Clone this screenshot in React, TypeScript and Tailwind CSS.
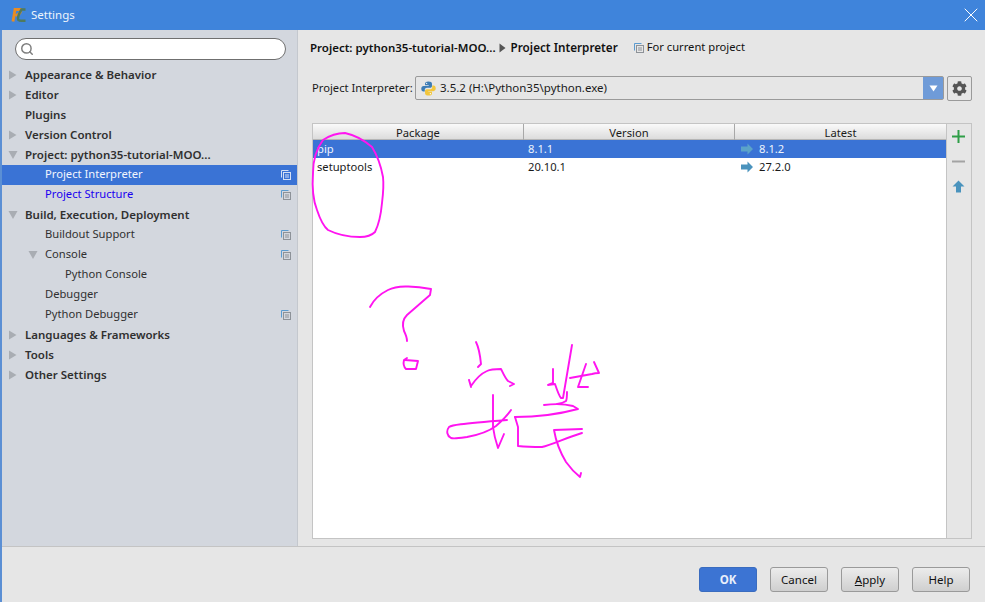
import { Search, X } from 'lucide-react';
import { FaCog } from 'react-icons/fa';

type TreeRow = {
  label: string;
  bold?: boolean;
  arrow?: 'right' | 'down';
  level?: 0 | 1 | 2;
  copy?: boolean;
  selected?: boolean;
  link?: boolean;
};

const TREE: TreeRow[] = [
  { label: 'Appearance & Behavior', bold: true, arrow: 'right' },
  { label: 'Editor', bold: true, arrow: 'right' },
  { label: 'Plugins', bold: true },
  { label: 'Version Control', bold: true, arrow: 'right' },
  { label: 'Project: python35-tutorial-MOO...', bold: true, arrow: 'down' },
  { label: 'Project Interpreter', level: 1, copy: true, selected: true },
  { label: 'Project Structure', level: 1, copy: true, link: true },
  { label: 'Build, Execution, Deployment', bold: true, arrow: 'down' },
  { label: 'Buildout Support', level: 1, copy: true },
  { label: 'Console', level: 1, arrow: 'down', copy: true },
  { label: 'Python Console', level: 2 },
  { label: 'Debugger', level: 1 },
  { label: 'Python Debugger', level: 1, copy: true },
  { label: 'Languages & Frameworks', bold: true, arrow: 'right' },
  { label: 'Tools', bold: true, arrow: 'right' },
  { label: 'Other Settings', bold: true, arrow: 'right' },
];

function Arrow({ dir }: { dir: 'right' | 'down' }) {
  return (
    <svg width="10" height="10" viewBox="0 0 10 10" className="shrink-0">
      {dir === 'right' ? (
        <polygon points="1,0.500 8.500,5 1,9.500" fill="#a9adb3" />
      ) : (
        <polygon points="0.500,1 9.500,1 5,9" fill="#a9adb3" />
      )}
    </svg>
  );
}

function CopyIcon({ light }: { light?: boolean }) {
  const front = light ? '#d5e0f5' : '#8d9298';
  const back = light ? '#d5e0f5' : '#5b9bd0';
  return (
    <svg width="10" height="10" viewBox="0 0 10 10" fill="none">
      <path d="M0.500 7.500V0.500H7.500" stroke={back} />
      <rect x="2.500" y="2.500" width="7" height="7" stroke={front} />
      <path d="M4 5H8M4 7H8" stroke={front} />
    </svg>
  );
}

function PythonIcon() {
  return (
    <svg width="15" height="15" viewBox="0 0 16 16">
      <path d="M8 0.500C5 0.500 4.300 1.500 4.300 3V4.500H8.200V5.200H2.800C1.200 5.200 0.300 6.400 0.300 8.200C0.300 10 1.200 11.200 2.600 11.200H4V9.400C4 8 5.200 7.200 6.400 7.200H9.800C10.900 7.200 11.700 6.400 11.700 5.300V3C11.700 1.400 10.300 0.500 8 0.500Z" fill="#3d7cb5" />
      <path d="M8 15.500C11 15.500 11.700 14.500 11.700 13V11.500H7.800V10.800H13.200C14.800 10.800 15.700 9.600 15.700 7.800C15.700 6 14.800 4.800 13.400 4.800H12V6.600C12 8 10.800 8.800 9.600 8.800H6.200C5.100 8.800 4.300 9.600 4.300 10.700V13C4.300 14.600 5.700 15.500 8 15.500Z" fill="#f2c63c" />
      <circle cx="6" cy="2.500" r="0.700" fill="#ffffff" />
      <circle cx="10" cy="13.500" r="0.700" fill="#ffffff" />
    </svg>
  );
}

function AppLogo() {
  return (
    <svg width="15" height="16" viewBox="0 0 15 16" fill="none" className="shrink-0">
      {/* orange P with the green C wrapped round it */}
      <path d="M2 14.500L4 2.500H9.500C10 5.500 8.500 7.500 4.500 8.500" stroke="#e98c22" strokeWidth="2.800" />
      <path d="M14.500 2.500H10.500C8.500 5.500 7 9 7 12C7 13.500 8.500 13.800 14.500 13.800" stroke="#4f7a5c" strokeWidth="2.400" />
    </svg>
  );
}

function UpdateArrow({ faded }: { faded?: boolean }) {
  return (
    <svg width="12" height="12" viewBox="0 0 12 12" className="shrink-0">
      <path d="M0 3.500H6.500V0.500L12 6L6.500 11.500V8.500H0Z" fill={faded ? '#5ba3c9' : '#4a93bd'} />
    </svg>
  );
}

function Scribbles() {
  return (
    <svg
      width="985"
      height="602"
      viewBox="0 0 985 602"
      fill="none"
      stroke="#ff14f0"
      strokeWidth="1.900"
      strokeLinecap="round"
      strokeLinejoin="round"
      className="absolute left-0 top-0 pointer-events-none"
    >
      {/* circle round the package names */}
      <path d="M345 133C336 133 329 136 323 140C317 148 313 160 313 173C312 187 313 200 317 210C320 219 323 226 328 230C338 235 350 237 360 237C367 237 372 235 375 232C379 224 381 214 382 203C383 195 384 186 383 177C381 166 377 155 372 147C364 140 354 135 345 133Z" />
      {/* question mark */}
      <path d="M370 307C374 299 380 294 388 290C396 286 412 285 431 289L430 295L407 315C403 319 402 325 404 331C406 335 407 338 407 341" />
      <path d="M407 358L404 360C403 364 404 367 406 369L416 369L418 361L405 360" />
      {/* handwriting */}
      <path d="M476 342C479 348 480 354 481 364L478 367" />
      <path d="M471 387L469 380L471 386C475 380 480 374 487 371C491 369 497 369 501 369C503 373 505 378 508 381L514 384L510 386" />
      <path d="M493 395L493 427C494 435 496 442 498 448L504 434" />
      <path d="M511 410C507 416 503 420 496 426C488 432 478 435 467 437C460 438 454 439 451 438C447 436 446 431 449 427C452 425 458 424 507 420" />
      <path d="M515 417C530 417 556 415 578 409L573 406C565 404 552 404 544 405" />
      <path d="M515 417L518 427L518 446C528 447 536 447 542 447C552 445 565 438 582 433" />
      <path d="M582 429L554 430C556 442 560 452 566 462C571 469 575 473 580 477L581 473" />
      <path d="M553 369V383L548 385L555 384C557 390 559 396 561 398L563 398C566 380 569 362 572 345" />
      <path d="M567 392C567 396 567 399 566 401C563 403 560 404 557 404" />
      <path d="M586 364L578 387M570 378L592 374C595 373 597 373 599 373L594 362M578 387H588" />
    </svg>
  );
}

function DialogButton({ children, primary }: { children: React.ReactNode; primary?: boolean }) {
  return (
    <button
      className={
        primary
          ? 'w-[58px] h-[25px] rounded-[3px] border border-[#3a6cbf] bg-[#3c74d3] text-[#e8effb] font-bold text-[11.500px]'
          : 'w-[58px] h-[25px] rounded-[3px] border border-[#9a9a9a] bg-gradient-to-b from-[#ececec] to-[#cfcfcf] text-[#111] text-[11.500px]'
      }
    >
      {children}
    </button>
  );
}

export default function App() {
  return (
    <div className="relative w-[985px] h-[602px] overflow-hidden flex flex-col bg-[#e6e6e6] font-['Noto_Sans',sans-serif] text-[11.200px] text-[#1a1a1a]">
      {/* Title bar */}
      <div className="h-[30px] shrink-0 bg-[#3f84db] flex items-center pl-[11px] pr-[2px]">
        <AppLogo />
        <span className="ml-[5px] text-[11.500px] text-[#eef4fc]">Settings</span>
        <X size={24} strokeWidth={1} className="ml-auto text-white" />
      </div>

      <div className="flex-1 min-h-0 flex flex-col border-l-2 border-[#5b8fd4]">
        <div className="flex-1 flex min-h-0">
          {/* Sidebar */}
          <div className="w-[296px] shrink-0 bg-[#d3d7de] border-r border-[#c4c8ce] pt-[8px]">
            <div className="ml-[13px] w-[271px] h-[22px] rounded-full border border-[#6f6f6f] bg-white flex items-center pl-[4px]">
              <Search size={14} strokeWidth={2.500} className="text-[#7d7d7d]" />
            </div>
            <div className="mt-[5px]">
              {TREE.map(row => (
                <div
                  key={row.label}
                  className={row.selected ? 'h-[20px] flex items-center pr-[6px] bg-[#3a73d5]' : 'h-[20px] flex items-center pr-[6px]'}
                >
                  <div className={row.level === 2 ? 'w-[63px] shrink-0' : row.level === 1 ? 'w-[43px] shrink-0 pl-[26px]' : 'w-[23px] shrink-0 pl-[6px]'}>
                    {row.arrow && <Arrow dir={row.arrow} />}
                  </div>
                  <span
                    className={
                      row.selected
                        ? 'pb-px text-[#f2f6fd]'
                        : row.link
                          ? 'pb-px text-[#1a00f0]'
                          : row.bold
                            ? 'pb-px font-semibold text-[11.500px] text-[#303030]'
                            : 'pb-px text-[#303030]'
                    }
                  >
                    {row.label}
                  </span>
                  {row.copy && (
                    <span className="ml-auto">
                      <CopyIcon light={row.selected} />
                    </span>
                  )}
                </div>
              ))}
            </div>
          </div>

          {/* Content */}
          <div className="flex-1 min-w-0 pl-[14px] pr-[13px] pt-[9px] flex flex-col">
            <div className="h-[17px] -ml-[2px] flex items-center text-[#111]">
              <span className="font-semibold text-[11.500px]">Project: python35-tutorial-MOO...</span>
              <svg width="7" height="10" viewBox="0 0 7 10" className="ml-[3px] mr-[5px]">
                <polygon points="0.500,0.500 6.500,5 0.500,9.500" fill="#555555" />
              </svg>
              <span className="font-semibold text-[11.700px]">Project Interpreter</span>
              <span className="ml-[16px] mr-[3px] flex">
                <CopyIcon />
              </span>
              <span>For current project</span>
            </div>

            {/* Interpreter row */}
            <div className="mt-[20px] h-[24px] flex items-center">
              <span className="w-[103px] shrink-0">Project Interpreter:</span>
              <div className="w-[530px] h-[24px] border border-[#9a9a9a] rounded-[2px] flex items-center pl-[5px]">
                <PythonIcon />
                <span className="ml-[4px] text-[11.500px]">3.5.2 (H:\Python35\python.exe)</span>
                <div className="ml-auto w-[20px] h-full bg-[#6f9bd8] flex items-center justify-center">
                  <svg width="9" height="7" viewBox="0 0 9 7">
                    <polygon points="0.500,0.500 8.500,0.500 4.500,6.500" fill="#ffffff" />
                  </svg>
                </div>
              </div>
              <div className="ml-[3px] w-[25px] h-[25px] border border-[#9a9a9a] rounded-[2px] flex items-center justify-center">
                <FaCog size={15} className="text-[#555555]" />
              </div>
            </div>

            {/* Package table */}
            <div className="mt-[23px] h-[416px] flex border border-[#c4c4c4]">
              <div className="flex-1 min-w-0 bg-white flex flex-col">
                <div className="h-[16px] shrink-0 grid grid-cols-[211px_211px_1fr] bg-gradient-to-b from-[#fafafa] to-[#dcdcdc] border-b border-[#b5b5b5]">
                  <span className="text-center leading-[17px] border-r border-[#a8a8a8]">Package</span>
                  <span className="text-center leading-[17px] border-r border-[#a8a8a8]">Version</span>
                  <span className="text-center leading-[17px]">Latest</span>
                </div>
                <div className="h-[18px] grid grid-cols-[211px_211px_1fr] bg-[#3a73d5] text-[#eef3fc] items-center">
                  <span className="pl-[4px]">pip</span>
                  <span className="pl-[4px]">8.1.1</span>
                  <span className="pl-[6px] flex items-center gap-[6px]">
                    <UpdateArrow faded />
                    8.1.2
                  </span>
                </div>
                <div className="h-[19px] grid grid-cols-[211px_211px_1fr] items-center">
                  <span className="pl-[4px]">setuptools</span>
                  <span className="pl-[4px]">20.10.1</span>
                  <span className="pl-[6px] flex items-center gap-[6px]">
                    <UpdateArrow />
                    27.2.0
                  </span>
                </div>
              </div>
              <div className="w-[25px] shrink-0 border-l border-[#c4c4c4] flex flex-col items-center pr-[2px] pt-[6px] gap-[12px]">
                <svg width="13" height="13" viewBox="0 0 13 13">
                  <path d="M5.500 0H7.500V5.500H13V7.500H7.500V13H5.500V7.500H0V5.500H5.500Z" fill="#2e9e47" />
                </svg>
                <svg width="13" height="13" viewBox="0 0 13 13">
                  <rect x="0" y="5.500" width="13" height="2" fill="#a3a3a3" />
                </svg>
                <svg width="13" height="13" viewBox="0 0 13 13">
                  <path d="M6.500 0.500L12.500 6.500H9V12.500H4V6.500H0.500Z" fill="#4a93bd" />
                </svg>
              </div>
            </div>
          </div>
        </div>

        {/* Footer */}
        <div className="h-[56px] shrink-0 border-t border-[#c4c4c4] flex items-start justify-end gap-[13px] pt-[20px] pr-[15px]">
          <DialogButton primary>OK</DialogButton>
          <DialogButton>Cancel</DialogButton>
          <DialogButton>
            <span className="underline">A</span>pply
          </DialogButton>
          <DialogButton>Help</DialogButton>
        </div>
      </div>

      <Scribbles />
    </div>
  );
}
